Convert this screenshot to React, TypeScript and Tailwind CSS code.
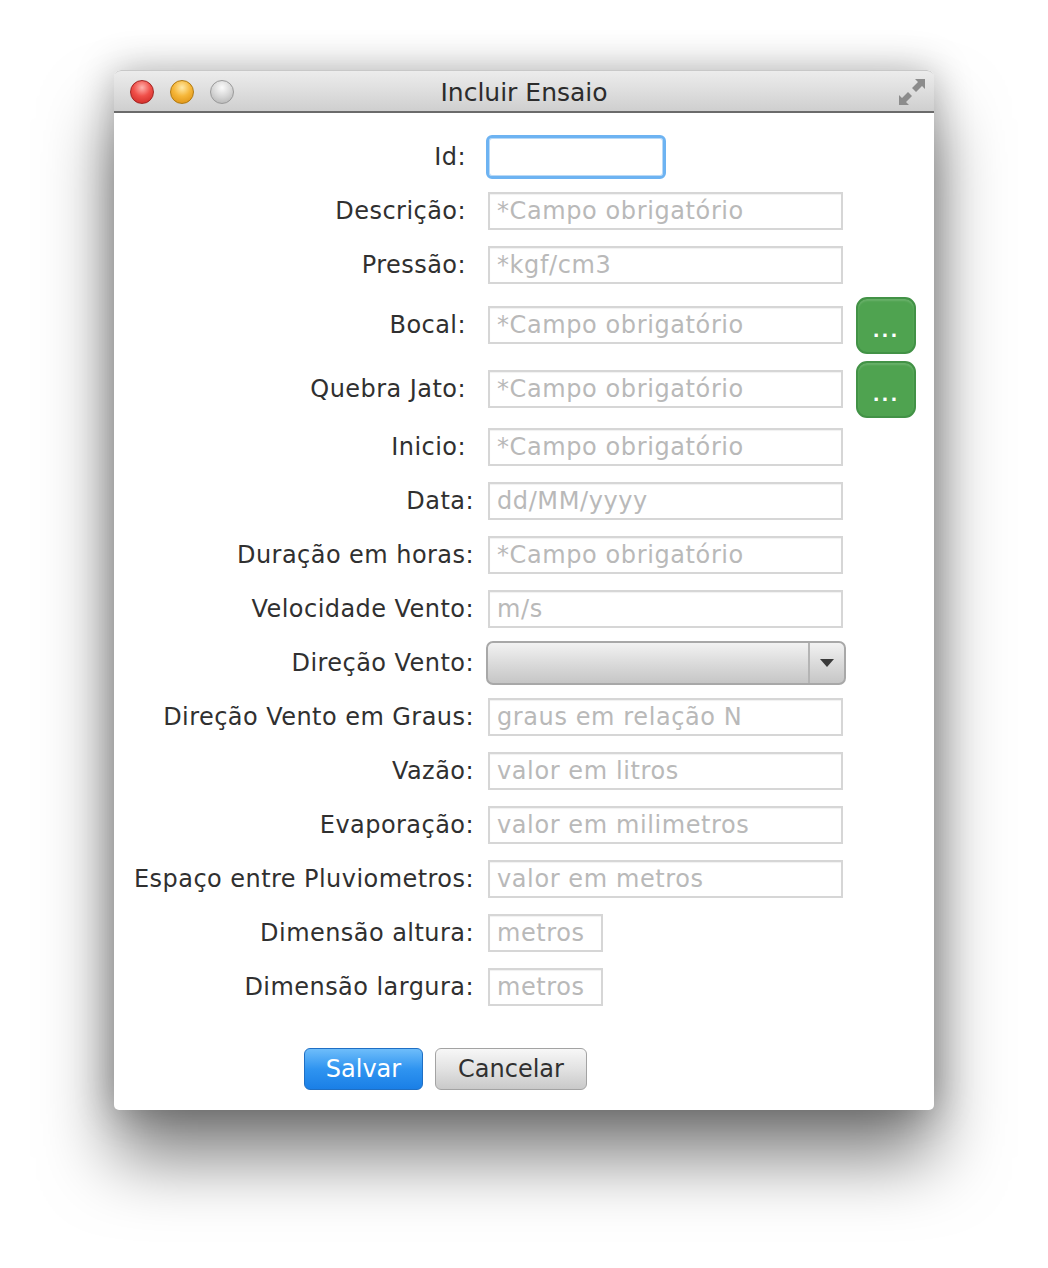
import React from "react";

const font = { fontFamily: '"DejaVu Sans", "Liberation Sans", sans-serif' };

type Row = {
  label: string;
  kind: "focus" | "text" | "select" | "small";
  placeholder?: string;
  h: number;
  group: 1 | 2;
  btn?: boolean;
};

const rows: Row[] = [
  { label: "Id:", kind: "focus", h: 54, group: 1 },
  { label: "Descrição:", kind: "text", placeholder: "*Campo obrigatório", h: 54, group: 1 },
  { label: "Pressão:", kind: "text", placeholder: "*kgf/cm3", h: 54, group: 1 },
  { label: "Bocal:", kind: "text", placeholder: "*Campo obrigatório", h: 66, group: 1, btn: true },
  { label: "Quebra Jato:", kind: "text", placeholder: "*Campo obrigatório", h: 62, group: 1, btn: true },
  { label: "Inicio:", kind: "text", placeholder: "*Campo obrigatório", h: 54, group: 1 },
  { label: "Data:", kind: "text", placeholder: "dd/MM/yyyy", h: 54, group: 2 },
  { label: "Duração em horas:", kind: "text", placeholder: "*Campo obrigatório", h: 54, group: 2 },
  { label: "Velocidade Vento:", kind: "text", placeholder: "m/s", h: 54, group: 2 },
  { label: "Direção Vento:", kind: "select", h: 54, group: 2 },
  { label: "Direção Vento em Graus:", kind: "text", placeholder: "graus em relação N", h: 54, group: 2 },
  { label: "Vazão:", kind: "text", placeholder: "valor em litros", h: 54, group: 2 },
  { label: "Evaporação:", kind: "text", placeholder: "valor em milimetros", h: 54, group: 2 },
  { label: "Espaço entre Pluviometros:", kind: "text", placeholder: "valor em metros", h: 54, group: 2 },
  { label: "Dimensão altura:", kind: "small", placeholder: "metros", h: 54, group: 2 },
  { label: "Dimensão largura:", kind: "small", placeholder: "metros", h: 54, group: 2 },
];

function Field({ row }: { row: Row }) {
  if (row.kind === "focus") {
    return (
      <div className="ml-[-2px] w-[180px] h-[44px] rounded-[6px] border-[3px] border-[#6db3f2] bg-white shadow-[inset_0_0_0_1px_#b9d9f6]" />
    );
  }
  if (row.kind === "select") {
    return (
      <div className="ml-[-2px] w-[360px] h-[44px] rounded-[7px] border-2 border-[#a8a8a8] bg-[linear-gradient(#f2f2f2,#d9d9d9_55%,#c6c6c6)] flex justify-end">
        <div className="w-[36px] h-full border-l-2 border-[#b4b4b4] flex items-center justify-center">
          <svg width="16" height="10" viewBox="0 0 16 10">
            <polygon points="1,1 15,1 8,9" fill="#3a3a3a" />
          </svg>
        </div>
      </div>
    );
  }
  const w = row.kind === "small" ? "w-[115px]" : "w-[355px]";
  return (
    <div className="flex items-center gap-[13px]">
      <div
        className={`${w} h-[38px] border-2 border-[#d6d6d6] bg-white shadow-[inset_0_1px_1px_rgba(0,0,0,0.06)] flex items-center pl-[7px] overflow-hidden whitespace-nowrap text-[24px] tracking-[0.6px] text-[#b9b9b9]`}
      >
        {row.placeholder}
      </div>
      {row.btn && (
        <div className="w-[60px] h-[57px] rounded-[11px] bg-[#4fa350] border-2 border-[#429246] shadow-[inset_0_2px_2px_rgba(255,255,255,0.15)] flex items-end justify-center pb-[12px]">
          <span className="text-white font-bold text-[18px] leading-none tracking-[2px]">...</span>
        </div>
      )}
    </div>
  );
}

export default function App() {
  return (
    <div className="w-[1048px] min-h-[1268px] bg-white pt-[70px] pl-[114px]" style={font}>
      <div className="w-[820px] h-[1040px] rounded-t-[7px] rounded-b-[5px] bg-white flex flex-col overflow-hidden shadow-[0_48px_70px_rgba(0,0,0,0.5),0_0_38px_rgba(0,0,0,0.28)]">
        {/* Title bar */}
        <div className="h-[43px] shrink-0 relative flex items-center bg-[linear-gradient(#ececec,#dedede_50%,#cfcfcf)] border-t border-[#c8c8c8] border-b-2 border-b-[#6b6b6b] rounded-t-[7px]">
          <div className="flex items-center gap-[16px] pl-[16px] mt-[2px]">
            <div className="w-[24px] h-[24px] rounded-full border border-[#a12523] bg-[radial-gradient(circle_at_50%_30%,#ffb3ae_0%,#f0504a_45%,#c8221e_100%)]" />
            <div className="w-[24px] h-[24px] rounded-full border border-[#b07a12] bg-[radial-gradient(circle_at_50%_30%,#ffeaa8_0%,#f6b73a_45%,#d98b0c_100%)]" />
            <div className="w-[24px] h-[24px] rounded-full border border-[#9a9a9a] bg-[radial-gradient(circle_at_50%_30%,#fbfbfb_0%,#d6d6d6_50%,#adadad_100%)]" />
          </div>
          <div className="absolute inset-0 pt-[3px] flex items-center justify-center text-[25px] text-[#2c2c2c] pointer-events-none">
            Incluir Ensaio
          </div>
          <div className="ml-auto mr-[8px] mt-[2px]">
            <svg width="28" height="28" viewBox="0 0 28 28">
              <polygon points="27,1 27,11 24,8 18,14 14,10 20,4 17,1" fill="#8c8c8c" />
              <polygon points="1,27 1,17 4,20 10,14 14,18 8,24 11,27" fill="#8c8c8c" />
            </svg>
          </div>
        </div>

        {/* Form */}
        <div className="pt-[17px] flex flex-col text-[24px] text-[#303030]">
          {rows.map((r) => (
            <div key={r.label} className="flex items-center" style={{ height: r.h }}>
              <div
                className={`w-[374px] shrink-0 text-right whitespace-nowrap tracking-[0.45px] ${r.group === 1 ? "pr-[22px]" : "pr-[14px]"}`}
              >
                {r.label}
              </div>
              <Field row={r} />
            </div>
          ))}
          <div className="mt-[34px] pl-[190px] flex gap-[12px]">
            <div className="w-[119px] h-[42px] rounded-[6px] border border-[#1f6fc4] bg-[linear-gradient(#6ebdfa,#2f94f0_50%,#1a7fe6)] flex items-center justify-center text-white text-[24px]">
              Salvar
            </div>
            <div className="w-[152px] h-[42px] rounded-[6px] border border-[#a3a3a3] bg-[linear-gradient(#f7f7f7,#e2e2e2_50%,#c9c9c9)] flex items-center justify-center text-[#303030] text-[24px]">
              Cancelar
            </div>
          </div>
        </div>
      </div>
    </div>
  );
}
